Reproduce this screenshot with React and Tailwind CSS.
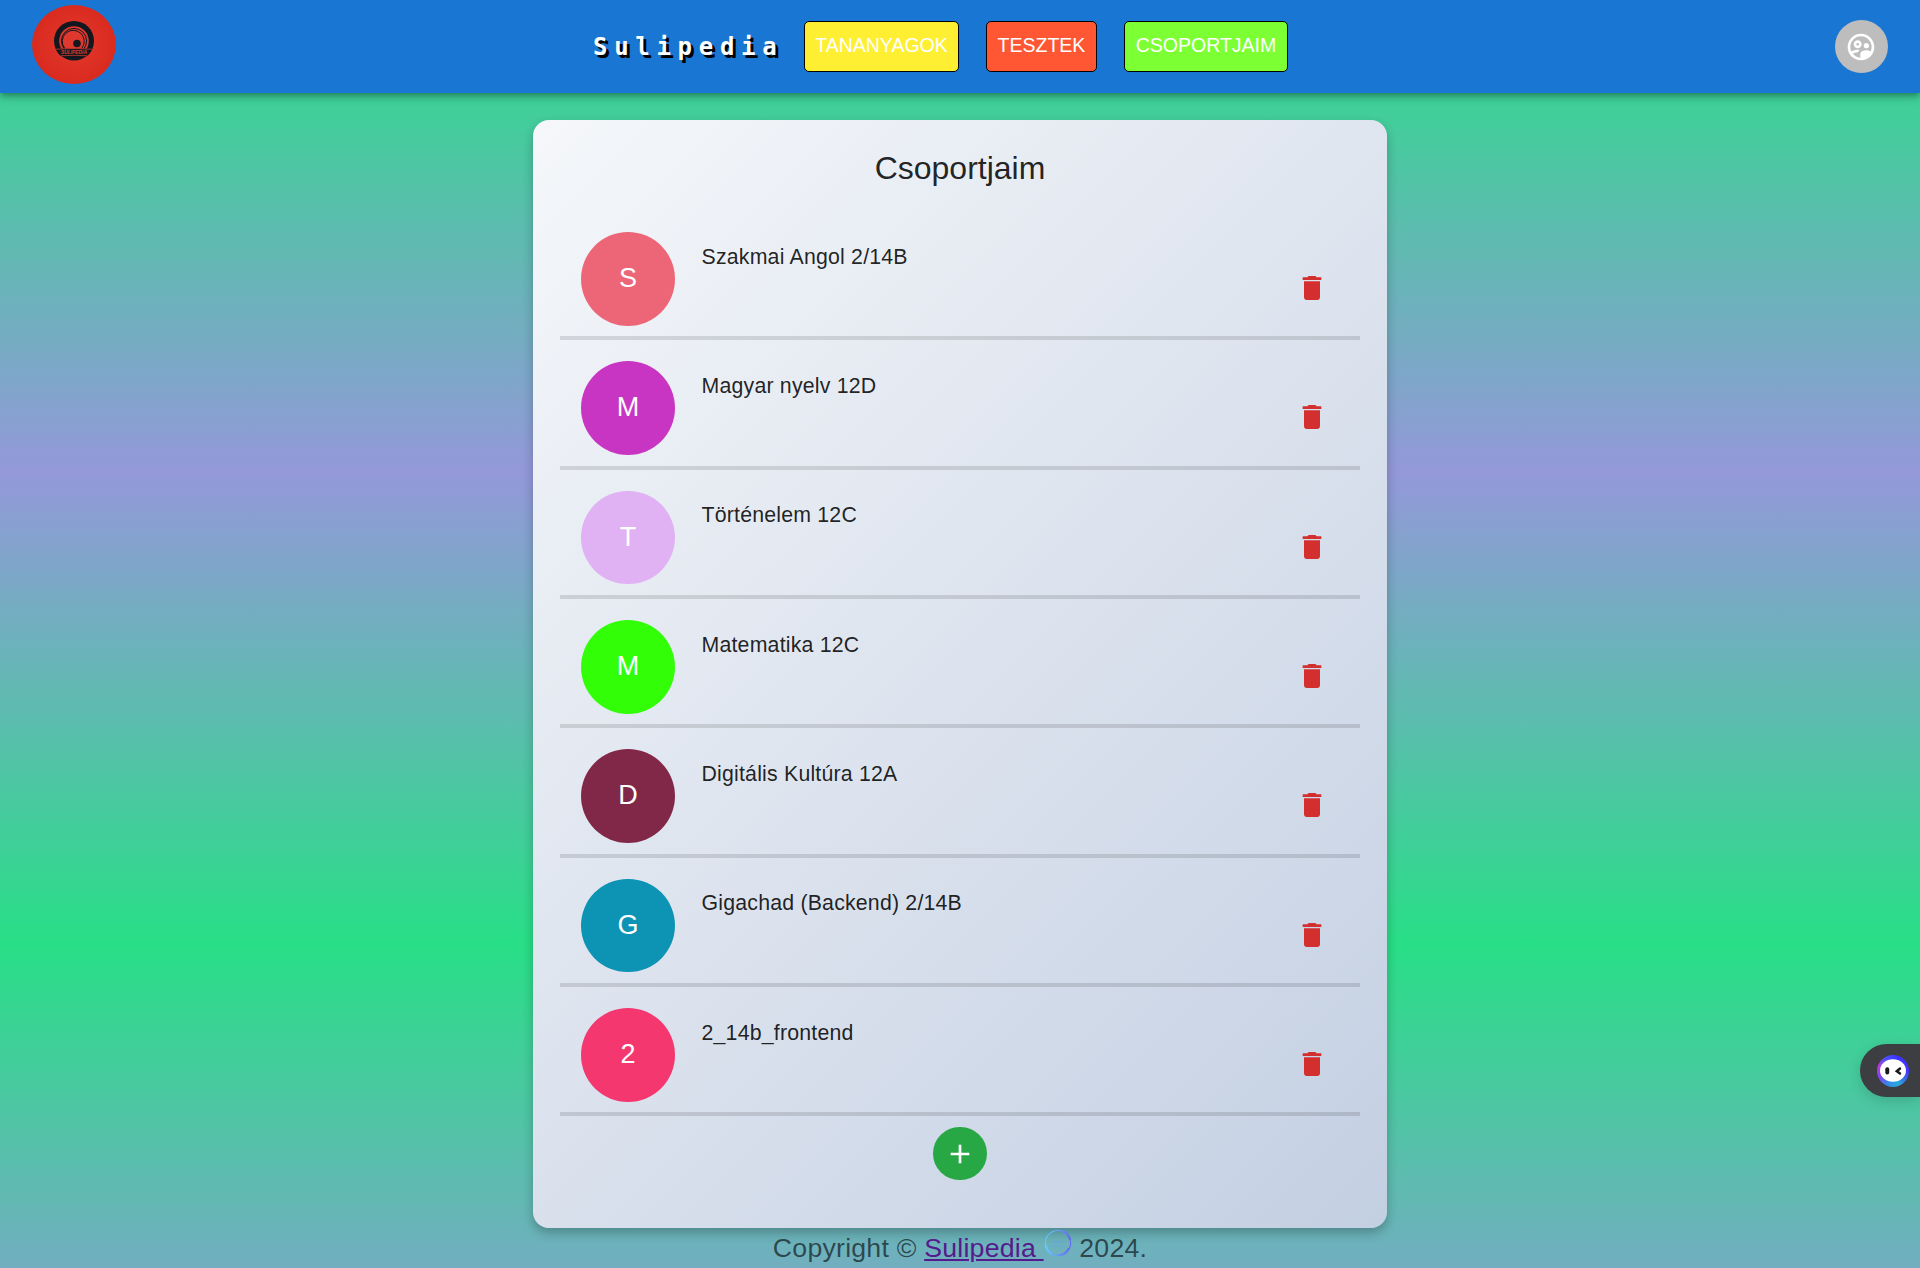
import { MdOutlineSupervisedUserCircle } from 'react-icons/md';

const groups = [
  { letter: 'S', name: 'Szakmai Angol 2/14B', color: 'bg-[#ec6678]' },
  { letter: 'M', name: 'Magyar nyelv 12D', color: 'bg-[#c835c3]' },
  { letter: 'T', name: 'Történelem 12C', color: 'bg-[#e0b2f4]' },
  { letter: 'M', name: 'Matematika 12C', color: 'bg-[#32ff07]' },
  { letter: 'D', name: 'Digitális Kultúra 12A', color: 'bg-[#812848]' },
  { letter: 'G', name: 'Gigachad (Backend) 2/14B', color: 'bg-[#0d93b3]' },
  { letter: '2', name: '2_14b_frontend', color: 'bg-[#f4376f]' },
];

function Logo() {
  return (
    <svg viewBox="0 0 84 79" className="ml-8 mt-[5px] h-[79px] w-[84px] shrink-0">
      <defs>
        <radialGradient id="logo-red">
          <stop offset="0" stopColor="#e23a30" />
          <stop offset="1" stopColor="#da2a1e" />
        </radialGradient>
      </defs>
      <ellipse cx="42" cy="39.5" rx="42" ry="39.5" fill="url(#logo-red)" />
      <ellipse cx="42" cy="35.8" rx="20" ry="19.8" fill="#13181e" />
      <circle cx="42" cy="36" r="14.8" fill="#df382e" />
      <circle cx="42" cy="36" r="12.6" fill="none" stroke="#13181e" strokeWidth="1" />
      <path d="M32.5 43A11 11 0 1 1 50 43" fill="none" stroke="#13181e" strokeWidth="1" />
      <circle cx="45" cy="38.5" r="3.8" fill="#13181e" />
      <path d="M23.5 43.5H60.5Q58 49 55 51H29Q26 49 23.5 43.5Z" fill="#13181e" />
      <path d="M24 44.2Q42 42.8 60 44.2M29 50.7Q42 50 55 50.7" fill="none" stroke="#df382e" strokeWidth=".7" />
      <text x="42" y="49.4" textAnchor="middle" textLength="26" fontSize="5" fontWeight="700" fontStyle="italic" fontFamily="Liberation Sans, sans-serif" fill="#df382e">SULIPEDIA</text>
    </svg>
  );
}

function Trash() {
  return (
    <svg viewBox="0 0 24 24" className="mr-[32px] mt-[40px] h-8 w-8 shrink-0" fill="#d32f2f">
      <path d="M6 19c0 1.100.9 2 2 2h8c1.100 0 2-.9 2-2V7H6zM19 4h-3.500l-1-1h-5l-1 1H5v2h14z" />
    </svg>
  );
}

function Ring() {
  return (
    <svg viewBox="0 0 28 28" className="mt-px h-7 w-7">
      <defs>
        <linearGradient id="ring-blue" gradientUnits="userSpaceOnUse" x1="0" y1="0" x2="28" y2="0">
          <stop offset="0" stopColor="#65d0f7" />
          <stop offset="1" stopColor="#6365ee" />
        </linearGradient>
      </defs>
      <circle cx="14" cy="14" r="12.600" fill="none" stroke="url(#ring-blue)" strokeWidth="1.100" />
      <path d="M17 1.900A12.400 12.400 0 0 1 26.200 11M1.800 16A12.400 12.400 0 0 0 10 25.700M14 26.300A12.400 12.400 0 0 0 25 19" fill="none" stroke="url(#ring-blue)" strokeWidth="2.200" />
      <text x="13.500" y="14" textAnchor="middle" fontSize="4" fontFamily="Liberation Sans, sans-serif" fill="#65a5e3">digital</text>
      <text x="14" y="17.500" textAnchor="middle" fontSize="4" fontFamily="Liberation Sans, sans-serif" fill="#65a5e3">cultures</text>
    </svg>
  );
}

function Assistant() {
  return (
    <div className="fixed right-0 top-[1044px] flex h-[53px] w-[60px] items-center rounded-l-full bg-[#3c3e41] pl-[17px] shadow-[0_4px_14px_rgba(0,0,0,0.15)]">
      <div className="flex h-8 w-8 items-center justify-center rounded-full bg-[conic-gradient(from_20deg,#3b31ff,#4437ff_20%,#2ba7dc_38%,#338ce8_50%,#7a45f0_62%,#b63be0_74%,#4b50f5_86%,#3b31ff)]">
        <svg viewBox="0 0 26 23" className="h-[23px] w-[26px]">
          <ellipse cx="13" cy="11.500" rx="13" ry="11.300" fill="#fff" />
          <rect x="5.300" y="8.300" width="3.900" height="7.200" rx="1.900" fill="#17181b" />
          <path d="M20 9.500L16.800 12.200L20 14.500" fill="none" stroke="#17181b" strokeWidth="2.500" strokeLinecap="round" />
        </svg>
      </div>
    </div>
  );
}

export default function App() {
  return (
    <div className="h-[1268px] overflow-hidden bg-[linear-gradient(180deg,#28df86_0px,#9498da_472px,#28df86_944px,#9498da_1416px)] bg-[length:100%_1416px] font-['Liberation_Sans',Arial,sans-serif] text-[rgba(0,0,0,0.87)]">
      <header className="relative flex h-[93px] items-start bg-[#1976d2] shadow-[0_3px_5px_-1px_rgba(0,0,0,0.2),0_5px_7px_rgba(0,0,0,0.14),0_1px_13px_rgba(0,0,0,0.12)]">
        <Logo />
        <div className="ml-[477px] mt-[29px] w-[211px] whitespace-nowrap font-['DejaVu_Sans_Mono',monospace] text-[24px] font-bold leading-9 tracking-[6.700px] text-white [text-shadow:3px_3px_0_#000]">Sulipedia</div>
        <nav className="mt-[21px] flex gap-[27px] text-[19.500px] leading-[47px] text-white">
          <a className="h-[51px] w-[155px] rounded-[5px] border border-black bg-[#ffef33] text-center">TANANYAGOK</a>
          <a className="h-[51px] w-[111px] rounded-[5px] border border-black bg-[#ff5733] text-center">TESZTEK</a>
          <a className="h-[51px] w-[164px] rounded-[5px] border border-black bg-[#7cff33] text-center">CSOPORTJAIM</a>
        </nav>
        <div className="ml-auto mr-8 mt-5 flex h-[53px] w-[53px] items-center justify-center rounded-full bg-[#bdbdbd] text-white">
          <MdOutlineSupervisedUserCircle className="mr-px h-8 w-8" />
        </div>
      </header>
      <main className="mx-auto mt-[27px] h-[1108px] w-[854px] rounded-2xl bg-[linear-gradient(135deg,#f5f7fa,#c3cfe2)] px-[27px] pt-[27px] shadow-[0_5px_11px_rgba(0,0,0,0.25)]">
        <h1 className="text-center text-[32px] leading-[43px]">Csoportjaim</h1>
        <ul className="mt-[21px]">
          {groups.map((g) => (
            <li key={g.name} className="flex h-[129.330px] items-start border-b-4 border-black/[0.12] pl-[21px] pt-[21px]">
              <div className={`flex h-[93.700px] w-[94px] shrink-0 items-center justify-center rounded-full pb-px text-[27px] text-white ${g.color}`}>{g.letter}</div>
              <span className="ml-[26.500px] mt-[8.700px] grow text-[21.300px] leading-8 tracking-[0.2px]">{g.name}</span>
              <Trash />
            </li>
          ))}
        </ul>
        <button className="mx-auto mt-[11px] flex h-[53px] w-[54px] items-center justify-center rounded-full bg-[#28a745]">
          <svg viewBox="0 0 24 24" className="mt-px h-8 w-8" fill="#fff"><path d="M19 13h-6v6h-2v-6H5v-2h6V5h2v6h6z" /></svg>
        </button>
      </main>
      <footer className="flex justify-center whitespace-pre text-[26.700px] leading-[41px] tracking-[0.220px] text-black/60">
        <span>Copyright © </span>
        <a className="text-[#551a8b] underline">Sulipedia </a>
        <Ring />
        <span> 2024.</span>
      </footer>
      <Assistant />
    </div>
  );
}
